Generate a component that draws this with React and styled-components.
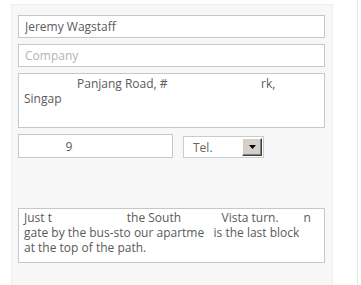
import React from "react";
import styled, { createGlobalStyle } from "styled-components";

const GlobalStyle = createGlobalStyle`
  html, body {
    margin: 0;
    padding: 0;
    background: #ffffff;
  }
  body {
    font-family: "Open Sans", "Liberation Sans", Arial, sans-serif;
    font-size: 12px;
    color: #5a5a5a;
  }
`;

const nb = "\u00a0";
const gap = n => nb.repeat(n);

const App = () => {
  return (
    <Page>
      <GlobalStyle />
      <Panel>
        <Field type="text" defaultValue="Jeremy Wagstaff" />
        <Field type="text" placeholder="Company" />
        <Area
          rows={3}
          readOnly
          value={`${gap(17)}Panjang Road, #${gap(30)}rk,\nSingap${gap(10)}`}
        />
        <PhoneRow>
          <PhoneField type="text" defaultValue={`${gap(13)}9`} />
          <SelectBox>
            <SelectValue>Tel.</SelectValue>
            <SelectButton>
              <svg width="7" height="4" viewBox="0 0 7 4">
                <path d="M0 0h7L3.5 4z" fill="#000" />
              </svg>
            </SelectButton>
          </SelectBox>
        </PhoneRow>
        <Notes
          rows={3}
          readOnly
          value={`Just t${gap(24)}the South${gap(13)}Vista turn.${gap(8)}n\ngate by the bus-sto${gap(1)}our apartme${gap(3)}is the last block\nat the top of the path.`}
        />
      </Panel>
      <Divider />
    </Page>
  );
};

// LAYOUT

const Page = styled.div`
  display: flex;
  height: 285px;
  overflow: hidden;
`;

const Panel = styled.div`
  margin: 4px 0 0 11px;
  width: 322px;
  box-sizing: border-box;
  background: #f7f7f7;
  border: 1px solid #efefef;
  border-bottom: none;
  padding: 10px 0 0 6px;
  display: flex;
  flex-direction: column;
  gap: 6px;
`;

const Divider = styled.div`
  margin-left: 24px;
  width: 1px;
  background: #e6e6e6;
`;

// FIELDS

const Field = styled.input`
  box-sizing: border-box;
  width: 307px;
  height: 23px;
  margin: 0;
  padding: 0 6px;
  border: 1px solid #c3c8c8;
  background: #ffffff;
  font-family: inherit;
  font-size: 12px;
  color: #5a5a5a;
  outline: none;

  &::placeholder {
    color: #b4b4b4;
  }
`;

const Area = styled.textarea`
  box-sizing: border-box;
  width: 307px;
  height: 55px;
  margin: 0;
  padding: 2px 5px;
  border: 1px solid #c3c8c8;
  background: #ffffff;
  font-family: inherit;
  font-size: 12px;
  line-height: 15px;
  color: #5a5a5a;
  resize: none;
  outline: none;
  overflow: hidden;
  white-space: pre;
`;

const Notes = styled(Area)`
  margin-top: 44px;
  padding: 1px 5px;
`;

const PhoneRow = styled.div`
  display: flex;
  align-items: flex-end;
  gap: 10px;
`;

const PhoneField = styled(Field)`
  width: 155px;
  height: 24px;
`;

// SELECT

const SelectBox = styled.div`
  box-sizing: border-box;
  width: 81px;
  height: 22px;
  border: 1px solid #c8cccc;
  background: #ffffff;
  display: flex;
  align-items: center;
  justify-content: space-between;
  padding: 1px 1px 1px 9px;
`;

const SelectValue = styled.span`
  color: #666666;
  font-size: 12px;
`;

const SelectButton = styled.div`
  box-sizing: border-box;
  width: 20px;
  height: 18px;
  background: #d4d0c8;
  border-top: 1px solid #ffffff;
  border-left: 1px solid #ffffff;
  border-right: 1px solid #404040;
  border-bottom: 1px solid #404040;
  box-shadow: inset -1px -1px 0 #808080;
  display: flex;
  align-items: center;
  justify-content: center;
`;

export default App;
